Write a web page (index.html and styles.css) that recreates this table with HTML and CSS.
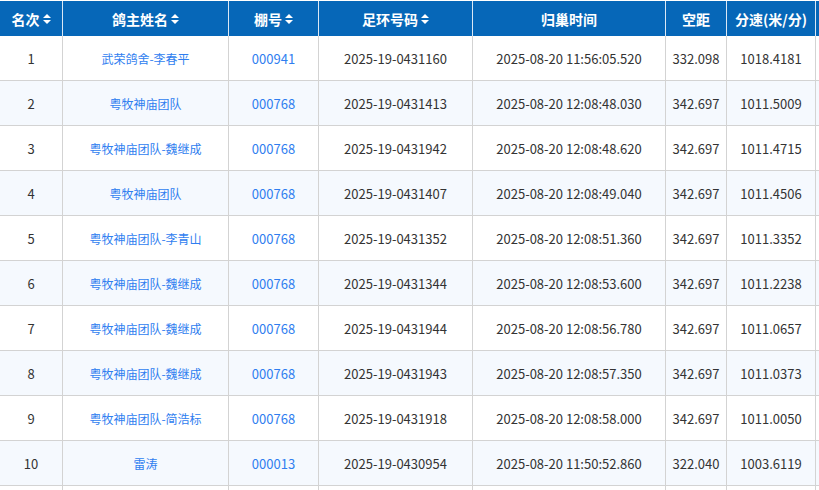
FILE: index.html
```html
<!DOCTYPE html>
<html lang="zh">
<head>
<meta charset="utf-8">
<link rel="stylesheet" href="styles.css">
</head>
<body>
<div class="table">
  <div class="row head">
    <div class="cell">名次<span class="sort"></span></div>
    <div class="cell">鸽主姓名<span class="sort"></span></div>
    <div class="cell">棚号<span class="sort"></span></div>
    <div class="cell">足环号码<span class="sort"></span></div>
    <div class="cell">归巢时间</div>
    <div class="cell">空距</div>
    <div class="cell">分速(米/分)</div>
    <div class="cell"></div>
  </div>
  <div class="row">
    <div class="cell">1</div><div class="cell link name">武荣鸽舍-李春平</div><div class="cell link">000941</div><div class="cell">2025-19-0431160</div><div class="cell">2025-08-20 11:56:05.520</div><div class="cell">332.098</div><div class="cell">1018.4181</div><div class="cell"></div>
  </div>
  <div class="row alt">
    <div class="cell">2</div><div class="cell link name">粤牧神庙团队</div><div class="cell link">000768</div><div class="cell">2025-19-0431413</div><div class="cell">2025-08-20 12:08:48.030</div><div class="cell">342.697</div><div class="cell">1011.5009</div><div class="cell"></div>
  </div>
  <div class="row">
    <div class="cell">3</div><div class="cell link name">粤牧神庙团队-魏继成</div><div class="cell link">000768</div><div class="cell">2025-19-0431942</div><div class="cell">2025-08-20 12:08:48.620</div><div class="cell">342.697</div><div class="cell">1011.4715</div><div class="cell"></div>
  </div>
  <div class="row alt">
    <div class="cell">4</div><div class="cell link name">粤牧神庙团队</div><div class="cell link">000768</div><div class="cell">2025-19-0431407</div><div class="cell">2025-08-20 12:08:49.040</div><div class="cell">342.697</div><div class="cell">1011.4506</div><div class="cell"></div>
  </div>
  <div class="row">
    <div class="cell">5</div><div class="cell link name">粤牧神庙团队-李青山</div><div class="cell link">000768</div><div class="cell">2025-19-0431352</div><div class="cell">2025-08-20 12:08:51.360</div><div class="cell">342.697</div><div class="cell">1011.3352</div><div class="cell"></div>
  </div>
  <div class="row alt">
    <div class="cell">6</div><div class="cell link name">粤牧神庙团队-魏继成</div><div class="cell link">000768</div><div class="cell">2025-19-0431344</div><div class="cell">2025-08-20 12:08:53.600</div><div class="cell">342.697</div><div class="cell">1011.2238</div><div class="cell"></div>
  </div>
  <div class="row">
    <div class="cell">7</div><div class="cell link name">粤牧神庙团队-魏继成</div><div class="cell link">000768</div><div class="cell">2025-19-0431944</div><div class="cell">2025-08-20 12:08:56.780</div><div class="cell">342.697</div><div class="cell">1011.0657</div><div class="cell"></div>
  </div>
  <div class="row alt">
    <div class="cell">8</div><div class="cell link name">粤牧神庙团队-魏继成</div><div class="cell link">000768</div><div class="cell">2025-19-0431943</div><div class="cell">2025-08-20 12:08:57.350</div><div class="cell">342.697</div><div class="cell">1011.0373</div><div class="cell"></div>
  </div>
  <div class="row">
    <div class="cell">9</div><div class="cell link name">粤牧神庙团队-简浩标</div><div class="cell link">000768</div><div class="cell">2025-19-0431918</div><div class="cell">2025-08-20 12:08:58.000</div><div class="cell">342.697</div><div class="cell">1011.0050</div><div class="cell"></div>
  </div>
  <div class="row alt">
    <div class="cell">10</div><div class="cell link name">雷涛</div><div class="cell link">000013</div><div class="cell">2025-19-0430954</div><div class="cell">2025-08-20 11:50:52.860</div><div class="cell">322.040</div><div class="cell">1003.6119</div><div class="cell"></div>
  </div>
  <div class="row">
    <div class="cell"></div><div class="cell"></div><div class="cell"></div><div class="cell"></div><div class="cell"></div><div class="cell"></div><div class="cell"></div><div class="cell"></div>
  </div>
</div>
</body>
</html>
```

FILE: styles.css
```css
html, body {
  margin: 0;
  padding: 0;
  background: #ffffff;
  overflow: hidden;
}
body {
  font-family: "Noto Sans CJK SC", "Noto Sans", sans-serif;
  font-size: 13px;
  color: #333333;
}
.table {
  padding-top: 1px;
  width: 920px;
}
.row {
  display: grid;
  grid-template-columns: 63px 166px 90px 154px 193px 61px 89px 100px;
  height: 45px;
}
.row.alt {
  background: #f5f9fe;
}
.cell {
  box-sizing: border-box;
  border-right: 1px solid #d3d3d3;
  border-bottom: 1px solid #d3d3d3;
  display: flex;
  align-items: center;
  justify-content: center;
  white-space: nowrap;
}
.link {
  color: #2f7ef0;
}
.name {
  font-size: 12px;
}
.head {
  height: 35px;
  background: #0667b8;
}
.head .cell {
  color: #ffffff;
  font-weight: bold;
  font-size: 14px;
  border-bottom: none;
  border-right: 1px solid #dbe8f5;
}
.sort {
  display: inline-block;
  position: relative;
  width: 8px;
  height: 10px;
  margin-left: 3px;
}
.sort::before,
.sort::after {
  content: "";
  position: absolute;
  left: 0;
  border-left: 4px solid transparent;
  border-right: 4px solid transparent;
}
.sort::before {
  top: 0;
  border-bottom: 4px solid #ffffff;
}
.sort::after {
  bottom: 0;
  border-top: 4px solid #ffffff;
}
```
